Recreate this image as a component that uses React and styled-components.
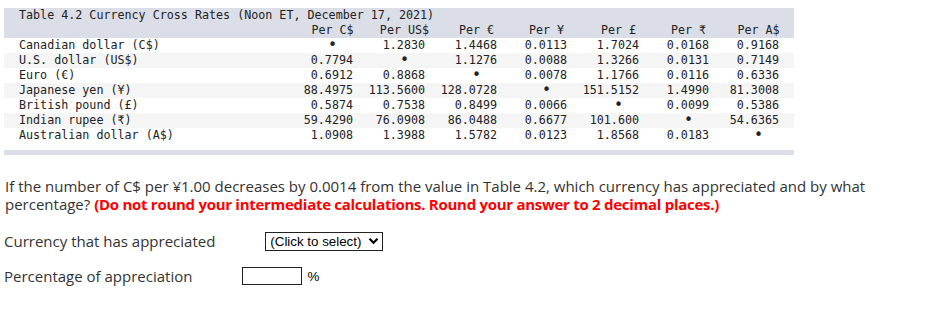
import React from 'react';
import styled, { createGlobalStyle } from 'styled-components';

const GlobalStyle = createGlobalStyle`
  body {
    margin: 0;
    background: #fff;
  }
`;

const columns = ['C$', 'US$', '€', '¥', '£', '₹', 'A$'];

const rates = [
  ['Canadian dollar (C$)', null, '1.2830', '1.4468', '0.0113', '1.7024', '0.0168', '0.9168'],
  ['U.S. dollar (US$)', '0.7794', null, '1.1276', '0.0088', '1.3266', '0.0131', '0.7149'],
  ['Euro (€)', '0.6912', '0.8868', null, '0.0078', '1.1766', '0.0116', '0.6336'],
  ['Japanese yen (¥)', '88.4975', '113.5600', '128.0728', null, '151.5152', '1.4990', '81.3008'],
  ['British pound (£)', '0.5874', '0.7538', '0.8499', '0.0066', null, '0.0099', '0.5386'],
  ['Indian rupee (₹)', '59.4290', '76.0908', '86.0488', '0.6677', '101.600', null, '54.6365'],
  ['Australian dollar (A$)', '1.0908', '1.3988', '1.5782', '0.0123', '1.8568', '0.0183', null],
];

const Page = styled.div`
  padding: 8px 4px;
  color: #333;
`;

const RateTable = styled.div`
  width: 790px;
  font-family: "DejaVu Sans Mono", "Liberation Mono", monospace;
  font-size: 11.7px;
  line-height: 15px;
  color: #222;
  border-bottom: 5px solid #dbdee7;
  padding-bottom: 7px;
`;

const Head = styled.div`
  background: #dbdee7;
`;

const Title = styled.div`
  padding-left: 15px;
`;

const Row = styled.div`
  display: grid;
  grid-template-columns: 262px 72px 72px 72px 70px 72px 70px 70px;
  padding-left: 15px;
  background: ${({ shaded }) => (shaded ? '#f5f5f5' : 'transparent')};
`;

const Label = styled.div`
  white-space: pre;
`;

const Cell = styled.div`
  justify-self: end;
  width: 41px;
  display: flex;
  justify-content: ${({ center }) => (center ? 'center' : 'flex-end')};
  white-space: pre;
`;

const Dot = styled.span`
  font-size: 15px;
`;

const Question = styled.p`
  margin: 22px 0 0 1px;
  width: 880px;
  font-family: "Open Sans", Lato, sans-serif;
  font-size: 15px;
  line-height: 18px;
  color: #333;
`;

const Warning = styled.strong`
  color: #f00;
  letter-spacing: -0.28px;
`;

const Field = styled.div`
  display: flex;
  align-items: center;
  gap: 50px;
  margin-top: ${({ top }) => top}px;
  font-family: "Open Sans", Lato, sans-serif;
  font-size: 15px;
  color: #333;
`;

const SelectBox = styled.div`
  width: 118px;
  height: 19px;
  box-sizing: border-box;
  border: 1px solid #222;
  display: flex;
  align-items: center;
  justify-content: space-between;
  padding: 0 3px 0 4px;
  font-family: "Liberation Sans", Arial, sans-serif;
  font-size: 13.33px;
  color: #000;
`;

const InputGroup = styled.div`
  display: flex;
  align-items: center;
  gap: 5px;
  font-family: "Liberation Sans", Arial, sans-serif;
  font-size: 13.33px;
  color: #000;
`;

const Input = styled.input`
  width: 60px;
  height: 18px;
  box-sizing: border-box;
  border: 1px solid #222;
  padding: 0;
  margin: 0;
`;

const Chevron = () => (
  <svg width="11" height="8" viewBox="0 0 11 8">
    <path d="M1.5 1.8 L5.5 5.8 L9.5 1.8" fill="none" stroke="#000" strokeWidth="2.2" />
  </svg>
);

export default function App() {
  return (
    <Page>
      <GlobalStyle />
      <RateTable>
        <Head>
          <Title>Table 4.2 Currency Cross Rates (Noon ET, December 17, 2021)</Title>
          <Row>
            <Label />
            {columns.map((c) => (
              <Cell key={c} center>Per {c}</Cell>
            ))}
          </Row>
        </Head>
        {rates.map(([label, ...values], i) => (
          <Row key={label} shaded={i % 2 === 1}>
            <Label>{label}</Label>
            {values.map((v, j) => (
              <Cell key={j} center={v === null}>
                {v === null ? <Dot>•</Dot> : v}
              </Cell>
            ))}
          </Row>
        ))}
      </RateTable>
      <Question>
        If the number of C$ per ¥1.00 decreases by 0.0014 from the value in Table 4.2, which currency has
        appreciated and by what percentage?{' '}
        <Warning>(Do not round your intermediate calculations. Round your answer to 2 decimal places.)</Warning>
      </Question>
      <Field top={18}>
        <span>Currency that has appreciated</span>
        <SelectBox>
          <span>(Click to select)</span>
          <Chevron />
        </SelectBox>
      </Field>
      <Field top={15}>
        <span>Percentage of appreciation</span>
        <InputGroup>
          <Input type="text" />
          <span>%</span>
        </InputGroup>
      </Field>
    </Page>
  );
}
